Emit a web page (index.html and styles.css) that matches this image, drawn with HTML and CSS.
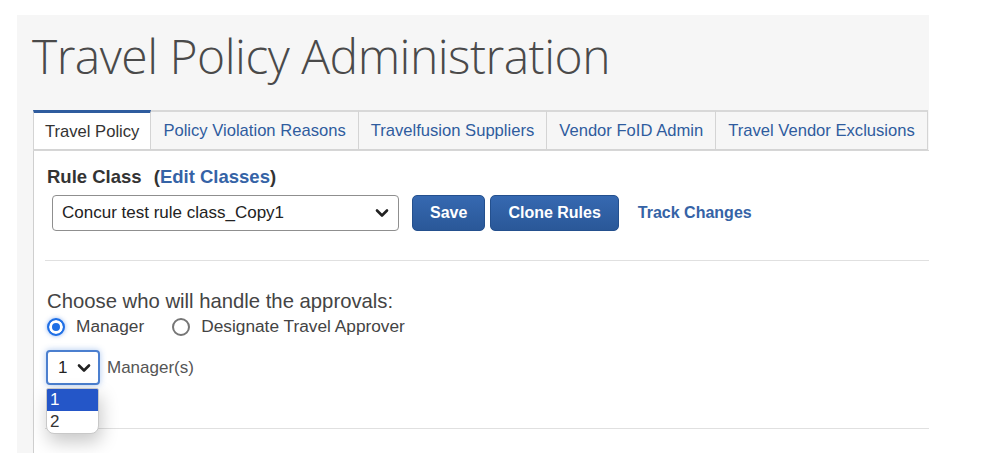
FILE: index.html
```html
<!DOCTYPE html>
<html lang="en">
<head>
    <meta charset="UTF-8">
    <meta name="viewport" content="width=device-width, initial-scale=1.0">
    <title>Travel Policy Administration</title>
    <link rel="stylesheet" href="styles.css">
</head>
<body>
    <div class="page">
        <h1>Travel Policy Administration</h1>

        <!-- Onglets -->
        <ul class="tabs">
            <li class="tab active">Travel Policy</li>
            <li class="tab">Policy Violation Reasons</li>
            <li class="tab">Travelfusion Suppliers</li>
            <li class="tab">Vendor FoID Admin</li>
            <li class="tab">Travel Vendor Exclusions</li>
        </ul>

        <div class="panel">
            <div class="rule-label">Rule Class <span class="paren">(<a href="#" class="link">Edit Classes</a>)</span></div>
            <div class="rule-row">
                <div class="select select-class">
                    <span>Concur test rule class_Copy1</span>
                    <svg width="14" height="10" viewBox="0 0 14 10"><path d="M2 2.5 L7 7.5 L12 2.5" fill="none" stroke="#222" stroke-width="2.6" stroke-linecap="round" stroke-linejoin="round"/></svg>
                </div>
                <button class="btn">Save</button>
                <button class="btn">Clone Rules</button>
                <a href="#" class="track">Track Changes</a>
            </div>

            <hr class="sep first">

            <p class="question">Choose who will handle the approvals:</p>
            <div class="radios">
                <label><input type="radio" name="approver" checked> Manager</label>
                <label><input type="radio" name="approver"> Designate Travel Approver</label>
            </div>

            <div class="count-row">
                <div class="count">
                    <div class="select select-small">
                        <span>1</span>
                        <svg width="14" height="10" viewBox="0 0 14 10"><path d="M2 2.5 L7 7.5 L12 2.5" fill="none" stroke="#222" stroke-width="2.6" stroke-linecap="round" stroke-linejoin="round"/></svg>
                    </div>
                    <!-- Liste deroulante ouverte -->
                    <ul class="options">
                        <li class="selected">1</li>
                        <li>2</li>
                    </ul>
                </div>
                <span class="count-label">Manager(s)</span>
            </div>

            <hr class="sep last">
        </div>
    </div>
</body>
</html>
```

FILE: styles.css
```css
/* Reset */
* {
    margin: 0;
    padding: 0;
    box-sizing: border-box;
}

body {
    font-family: "Liberation Sans", Arial, sans-serif;
    background: #fff;
    color: #333;
}

/* Zone grise */
.page {
    margin: 15px 0 0 17px;
    width: 912px;
    padding: 11px 0 0 16px;
    background: #f6f6f6;
}

h1 {
    font-family: "Open Sans", sans-serif;
    font-weight: 300;
    font-size: 48px;
    letter-spacing: -0.5px;
    line-height: 60px;
    color: #4a4a4a;
    margin-left: -1px;
}

/* Onglets */
.tabs {
    list-style: none;
    display: flex;
    margin-top: 24px;
    border-bottom: 1px solid #d6d6d6;
}

.tab {
    height: 40px;
    padding: 0 12px;
    display: flex;
    align-items: center;
    font-size: 16.6px;
    color: #2f5c9e;
    background: #f6f6f6;
    border: 1px solid #d4d4d4;
    border-top: 2px solid #d8d8d8;
    border-left: none;
}

.tab.active {
    padding: 1px 11px 0;
    color: #333;
    background: #fff;
    border-left: 1px solid #d4d4d4;
    border-top: 3px solid #2f5c9e;
}

/* Panneau blanc */
.panel {
    background: #fff;
    border-left: 1px solid #cfcfcf;
    padding: 15px 0 24px 13px;
}

.rule-label {
    font-size: 18.5px;
    font-weight: bold;
    line-height: 21px;
    color: #333;
}

.paren {
    margin-left: 7px;
}

.link {
    color: #3563a6;
    text-decoration: none;
}

.rule-row {
    display: flex;
    align-items: center;
    margin-top: 8px;
    margin-left: 5px;
}

.select {
    display: flex;
    align-items: center;
    justify-content: space-between;
    background: #fff;
    border: 1px solid #8f8f8f;
    border-radius: 4px;
    color: #222;
    font-size: 17px;
}

.select-class {
    width: 347px;
    height: 36px;
    padding: 0 9px 0 9px;
}

.btn {
    height: 36px;
    padding: 0 17px;
    margin-left: 5px;
    font-family: "Liberation Sans", Arial, sans-serif;
    font-size: 16px;
    font-weight: bold;
    color: #fff;
    background: linear-gradient(#3669b1, #2a5898);
    border: 1px solid #24508e;
    border-radius: 5px;
}

.btn:first-of-type {
    margin-left: 13px;
}

.track {
    margin-left: 19px;
    font-size: 16px;
    font-weight: bold;
    color: #3563a6;
    text-decoration: none;
}

.sep {
    border: none;
    border-top: 1px solid #e0e0e0;
    margin-left: -2px;
}

.sep.first {
    margin-top: 29px;
}

.question {
    margin-top: 29px;
    font-size: 20.3px;
    line-height: 23px;
    color: #444;
}

.radios {
    display: flex;
    gap: 28px;
    margin-top: 3px;
    font-size: 17.3px;
    color: #444;
}

.radios label {
    display: flex;
    align-items: center;
    gap: 11px;
}

.radios input {
    appearance: none;
    width: 18px;
    height: 18px;
    border: 2px solid #767676;
    border-radius: 50%;
    background: #fff;
}

.radios input:checked {
    border-color: #1f6fe5;
    background: #1f6fe5;
    box-shadow: inset 0 0 0 3px #fff, 0 0 4px rgba(40, 110, 230, 0.5);
}

.count-row {
    display: flex;
    align-items: center;
    margin-top: 13px;
    margin-left: -1px;
}

.count {
    position: relative;
}

.select-small {
    width: 54px;
    height: 35px;
    padding: 0 7px 0 10px;
    border: 2px solid #4b7fcf;
    box-shadow: 0 0 6px rgba(70, 130, 220, 0.45);
}

.count-label {
    margin-left: 7px;
    font-size: 17px;
    color: #555;
}

/* Liste ouverte */
.options {
    position: absolute;
    top: 38px;
    left: 0;
    width: 53px;
    list-style: none;
    background: #fff;
    border: 1px solid #c8c8c8;
    border-radius: 2px 2px 8px 8px;
    box-shadow: 2px 8px 18px rgba(0, 0, 0, 0.22);
    overflow: hidden;
    font-size: 17px;
    color: #333;
    z-index: 2;
}

.options li {
    height: 22px;
    line-height: 22px;
    padding-left: 3px;
}

.options li.selected {
    background: #2456c8;
    color: #fff;
}

.sep.last {
    margin-top: 43px;
}
```
